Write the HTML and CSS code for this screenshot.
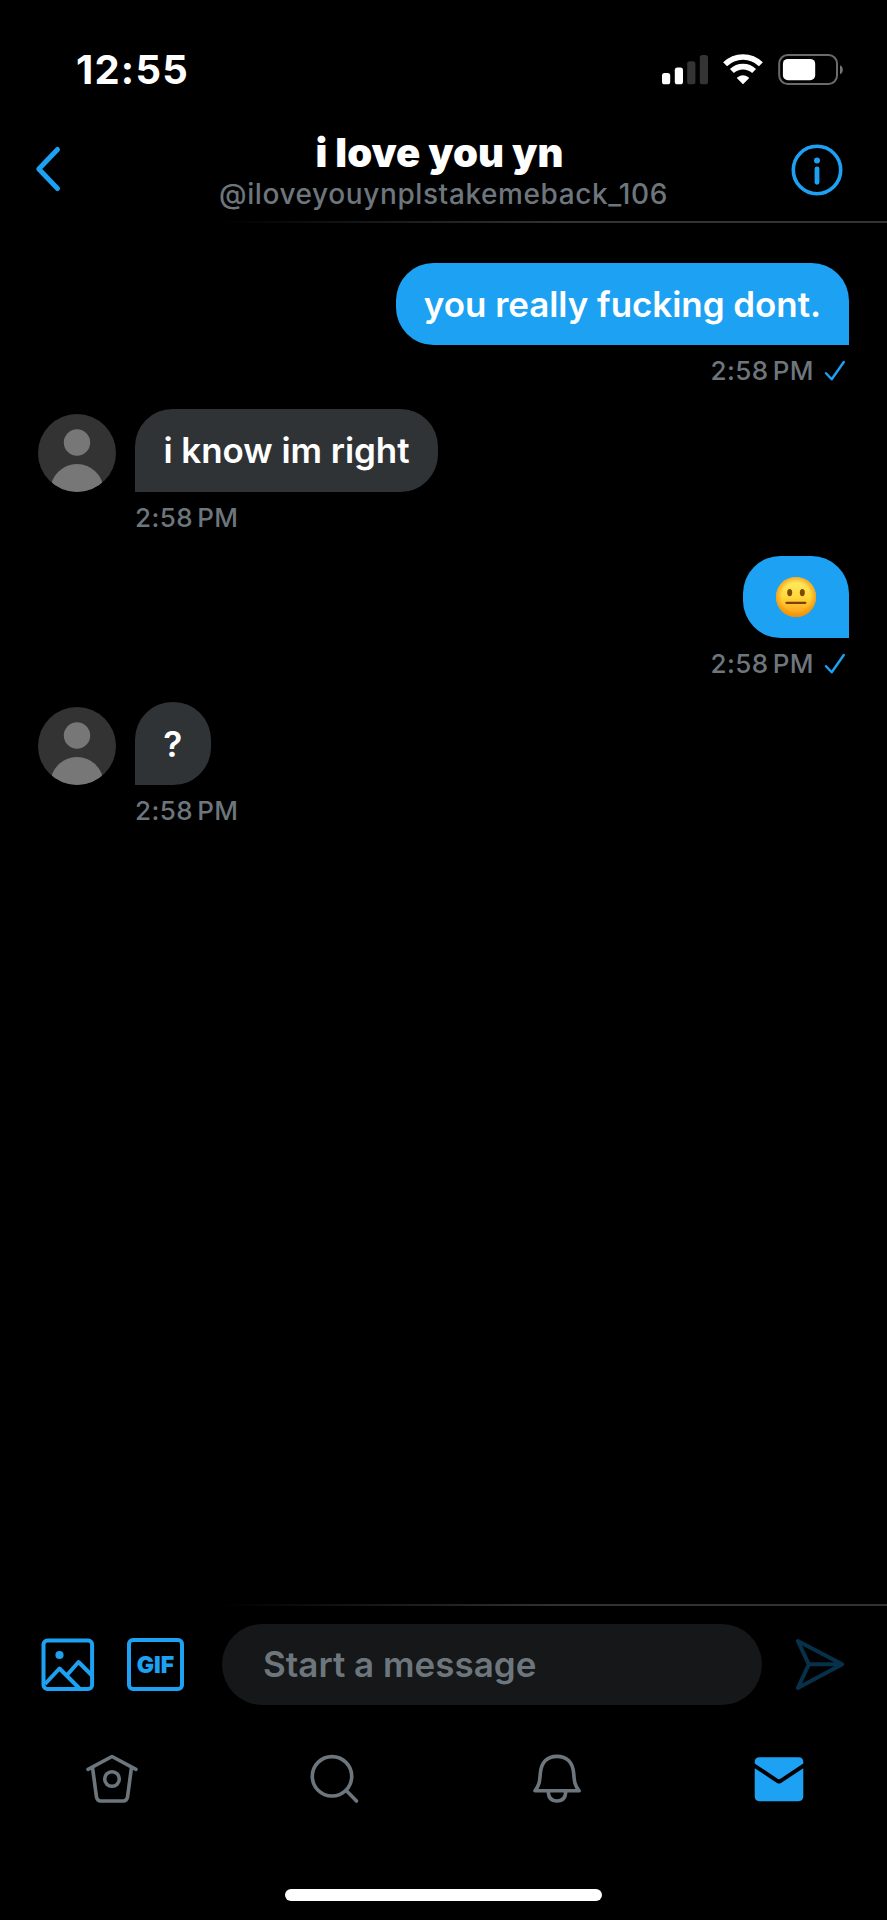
FILE: index.html
```html
<!DOCTYPE html>
<html lang="en">
<head>
<meta charset="utf-8">
<title>Messages</title>
<link rel="stylesheet" href="styles.css">
</head>
<body>
<div class="screen">
  <div class="status">
    <span class="clock">12:55</span>
    <svg class="status-icons" width="184" height="34" viewBox="0 0 184 34">
      <g fill="#fff">
        <rect x="0" y="21" width="8.2" height="11.3" rx="2.6"/>
        <rect x="12.8" y="15.6" width="8.2" height="16.7" rx="2.6"/>
      </g>
      <g fill="#343434">
        <rect x="25.2" y="9.2" width="8.2" height="23.1" rx="2.6"/>
        <rect x="37.8" y="3" width="8.2" height="29.3" rx="2.6"/>
      </g>
      <g fill="none" stroke="#fff" stroke-width="5.6">
        <path d="M63.1 12.3A25.5 25.5 0 0 1 98.9 12.3"/>
        <path d="M69.9 19.1A16 16 0 0 1 92.1 19.1"/>
      </g>
      <path d="M81 32.3L75 26.2Q74.9 25.7 75.5 25.3Q81 21.2 86.5 25.3Q87.1 25.7 87 26.2Z" fill="#fff"/>
      <rect x="117.2" y="3" width="57.8" height="29" rx="8.5" fill="none" stroke="#6b6b6b" stroke-width="2"/>
      <rect x="120.9" y="6.9" width="32.3" height="21.3" rx="5" fill="#fff"/>
      <path d="M178 13.3Q180.8 14.5 180.8 17.8Q180.8 21 178 22.2Z" fill="#757575"/>
    </svg>
  </div>
  <header class="header">
    <svg class="back" width="28" height="48" viewBox="0 0 28 48"><path d="M22.5 4.5L3.8 24L22.5 43.5" fill="none" stroke="#1da1f2" stroke-width="5" stroke-linecap="round" stroke-linejoin="round"/></svg>
    <div class="who">
      <div class="name">i love you yn</div>
      <div class="handle">@iloveyouynplstakemeback_106</div>
    </div>
    <svg class="info" width="52" height="52" viewBox="0 0 52 52"><circle cx="26" cy="26" r="23.7" fill="none" stroke="#1da1f2" stroke-width="3.6"/><circle cx="26" cy="16.5" r="3" fill="#1da1f2"/><path d="M26 24.8V38.3" stroke="#1da1f2" stroke-width="4.8" stroke-linecap="round"/></svg>
  </header>
  <div class="rule"></div>
  <main class="thread">
    <section class="message sent">
      <div class="bubble bubble-long"><span>you really fucking dont.</span></div>
      <div class="stamp"><span class="time">2:58<i class="thin"></i>PM</span><svg class="tick" width="22" height="22" viewBox="0 0 22 22"><path d="M2 13.2L7.7 19.3L19.8 2" fill="none" stroke="#1da1f2" stroke-width="2.4" stroke-linecap="round" stroke-linejoin="round"/></svg></div>
    </section>
    <section class="message received">
      <svg class="avatar" viewBox="0 0 78 78"><defs><clipPath id="face"><circle cx="39" cy="39" r="39"/></clipPath></defs><g clip-path="url(#face)"><rect width="78" height="78" fill="#333"/><circle cx="39" cy="28.5" r="13.2" fill="#777"/><circle cx="39" cy="76.5" r="26.5" fill="#777"/></g></svg>
      <div class="bubble bubble-mid"><span>i know im right</span></div>
      <div class="stamp"><span class="time">2:58<i class="thin"></i>PM</span></div>
    </section>
    <section class="message sent">
      <div class="bubble bubble-emoji"><svg width="42" height="42" viewBox="0 0 42 42" role="img" aria-label="neutral face">
        <defs>
          <linearGradient id="skin" x1="0" y1="0" x2="0" y2="1"><stop offset="0" stop-color="#fff06a"/><stop offset=".5" stop-color="#ffd83c"/><stop offset="1" stop-color="#f99a12"/></linearGradient>
          <radialGradient id="rim"><stop offset=".7" stop-color="#f28a00" stop-opacity="0"/><stop offset="1" stop-color="#f28a00" stop-opacity=".7"/></radialGradient>
        </defs>
        <circle cx="21" cy="21" r="20" fill="url(#skin)"/><circle cx="21" cy="21" r="20" fill="url(#rim)"/>
        <ellipse cx="14.7" cy="16.6" rx="2.5" ry="3.6" fill="#7d4800"/><ellipse cx="27.3" cy="16.6" rx="2.5" ry="3.6" fill="#7d4800"/>
        <path d="M11.5 26.8H30.3" stroke="#7d4000" stroke-width="2.3" stroke-linecap="round"/>
      </svg></div>
      <div class="stamp"><span class="time">2:58<i class="thin"></i>PM</span><svg class="tick" width="22" height="22" viewBox="0 0 22 22"><path d="M2 13.2L7.7 19.3L19.8 2" fill="none" stroke="#1da1f2" stroke-width="2.4" stroke-linecap="round" stroke-linejoin="round"/></svg></div>
    </section>
    <section class="message received">
      <svg class="avatar" viewBox="0 0 78 78"><g clip-path="url(#face)"><rect width="78" height="78" fill="#333"/><circle cx="39" cy="28.5" r="13.2" fill="#777"/><circle cx="39" cy="76.5" r="26.5" fill="#777"/></g></svg>
      <div class="bubble bubble-short"><span>?</span></div>
      <div class="stamp"><span class="time">2:58<i class="thin"></i>PM</span></div>
    </section>
  </main>
  <div class="rule"></div>
  <div class="composer">
    <svg class="photo" width="54" height="54" viewBox="0 0 54 54" fill="none" stroke="#1da1f2" stroke-width="4">
      <rect x="2.5" y="2.5" width="48.6" height="48.6" rx="4"/>
      <circle cx="18.5" cy="17" r="4.1" fill="#1da1f2" stroke="none"/>
      <path d="M4 46L18.5 30.5L39 51M26.5 36.5L37.5 24L51 37.5" stroke-linejoin="round"/>
    </svg>
    <div class="gif">GIF</div>
    <div class="field"><span class="placeholder">Start a message</span></div>
    <svg class="send" width="52" height="54" viewBox="0 0 52 54" fill="none" stroke="#07304a" stroke-width="4" stroke-linejoin="round" stroke-linecap="round"><path d="M3.8 3L48.2 26.3L3.8 50L14.8 26.3ZM14.8 26.3H47"/></svg>
  </div>
  <nav class="tabs">
    <div class="tab"><svg width="54" height="54" viewBox="0 0 54 54" fill="none" stroke="#6e767d" stroke-width="3.6" stroke-linecap="round" stroke-linejoin="round"><path d="M3 17.3L27 4.5L51 17.3"/><path d="M7.6 16L11.4 44.5Q12 49 16 49H38Q42 49 42.6 44.5L46.4 16"/><circle cx="27" cy="27" r="7.3"/></svg></div>
    <div class="tab"><svg width="54" height="54" viewBox="0 0 54 54" fill="none" stroke="#6e767d" stroke-width="3.6" stroke-linecap="round"><circle cx="25" cy="24.3" r="19.7"/><path d="M39.2 38.5L49.5 49"/></svg></div>
    <div class="tab"><svg width="54" height="54" viewBox="0 0 54 54" fill="none" stroke="#6e767d" stroke-width="3.6" stroke-linecap="round" stroke-linejoin="round"><path d="M4.9 38.8C9 34 9.7 30 10.3 21.5C11.2 10 17.5 4.4 27 4.4S42.8 10 43.7 21.5C44.3 30 45 34 49.1 38.8Z"/><path d="M18.3 39.8C18.5 46 22 49 27 49S35.5 46 35.7 39.8"/></svg></div>
    <div class="tab"><svg width="54" height="54" viewBox="0 0 54 54"><path fill="#1da1f2" d="M2.7 11.5V10Q2.7 5.3 7.5 5.3H46.5Q51.3 5.3 51.3 10V11.5L28.4 26.7Q27 27.6 25.6 26.7ZM2.7 16.2L25 31Q27 32.2 29 31L51.3 16.2V44Q51.3 49.2 46.5 49.2H7.5Q2.7 49.2 2.7 44Z"/></svg></div>
  </nav>
  <div class="home-bar"></div>
</div>
</body>
</html>
```
FILE: styles.css
```css
* { box-sizing: border-box; }
body { margin: 0; background: #000; font-family: Inter, "Liberation Sans", sans-serif; }
svg { display: block; flex: none; }
.screen { width: 887px; height: 1920px; display: flex; flex-direction: column; background: #000; overflow: hidden; }
.status { height: 112px; display: flex; justify-content: space-between; align-items: flex-start; padding: 52px 41px 0 76px; }
.clock { font-size: 40px; line-height: 35px; font-weight: 750; color: #fff; letter-spacing: 1.2px; white-space: nowrap; }
.header { height: 109px; display: grid; grid-template-columns: 90px 1fr 90px; align-items: start; }
.back { margin: 33px 0 0 34.5px; }
.info { margin: 31.5px 0 0 -6.5px; }
.who { display: flex; flex-direction: column; align-items: center; padding-top: 19px; white-space: nowrap; }
.name { font-size: 40px; line-height: 44px; font-weight: 900; color: #fff; margin-right: 8px; }
.handle { font-size: 28px; line-height: 38px; font-weight: 550; color: #6e767d; letter-spacing: 0.6px; }
.rule { flex: none; height: 2px; background: linear-gradient(90deg, #000 220px, #2f3336 560px); }
.thread { flex: 1; padding: 39.5px 38px 0; }
.message { display: grid; height: 146.6px; grid-template-rows: 82.5px 52px; align-content: start; white-space: nowrap; }
.received { grid-template-columns: 97px 1fr; justify-items: start; }
.sent { justify-items: end; }
.avatar { width: 78px; height: 78px; align-self: end; }
.bubble { height: 82.5px; display: flex; align-items: center; justify-content: center; font-size: 35px; line-height: 42px; font-weight: 580; color: #fff; letter-spacing: -0.05px; }
.sent .bubble { background: #1da1f2; border-radius: 37.5px 37.5px 0 37.5px; }
.received .bubble { background: #2f3336; border-radius: 37.5px 37.5px 37.5px 0; }
.bubble-long { width: 453px; }
.bubble-mid { width: 303px; }
.bubble-emoji { width: 106px; }
.bubble-short { width: 75.5px; }
.stamp { display: flex; align-items: center; height: 51px; font-size: 26px; font-weight: 550; color: #6e767d; letter-spacing: 0.45px; }
.sent .stamp { padding-right: 3px; gap: 10px; }
.received .stamp { grid-column: 2; }
.thin { display: inline-block; width: 4px; }
.composer { height: 101px; display: flex; align-items: flex-start; padding: 18px 41px 0 41px; }
.photo { margin-top: 14px; }
.gif { width: 57px; height: 53px; margin: 14px 38px 0 32px; border: 4px solid #1da1f2; border-radius: 6px; color: #1da1f2; font-size: 23px; line-height: 46px; font-weight: 900; text-align: center; }
.field { width: 540px; height: 81px; border-radius: 41px; background: #151718; display: flex; align-items: center; padding: 0 0 1px 41px; }
.placeholder { font-size: 35px; line-height: 42px; font-weight: 600; color: #6e767d; white-space: nowrap; }
.send { margin: 14px 0 0 32px; }
.tabs { height: 182px; display: grid; grid-template-columns: repeat(4, 222.3px); padding: 45px 0 0 1px; }
.tab { display: flex; justify-content: center; align-items: flex-start; }
.home-bar { flex: none; width: 317px; height: 12px; margin: 0 auto 19px; border-radius: 6px; background: #fff; }
```
